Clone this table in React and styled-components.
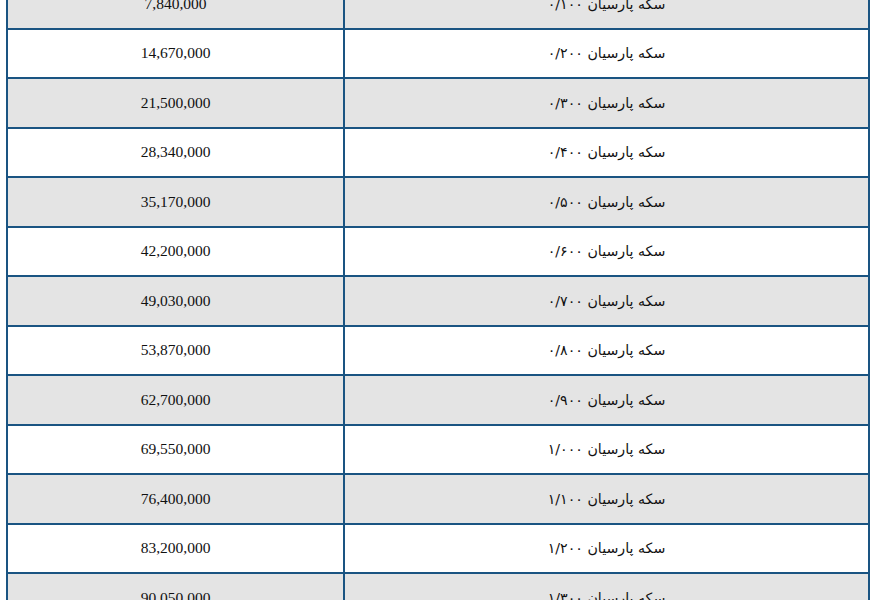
import React from "react";
import styled, { createGlobalStyle } from "styled-components";

const Global = createGlobalStyle`
  html, body { margin: 0; padding: 0; background: #ffffff; }
  body { overflow: hidden; }
`;

const Page = styled.div`
  padding: 0 3px 0 6px;
  margin-top: -22px;
`;

const Table = styled.table`
  direction: rtl;
  width: 864px;
  border-collapse: collapse;
  table-layout: fixed;
`;

const Row = styled.tr`
  height: 49.5px;
  background: ${(p) => (p.$odd ? "#e4e4e4" : "#ffffff")};
`;

const Cell = styled.td`
  border: 2px solid #1a5482;
  text-align: center;
  vertical-align: middle;
  padding: 0;
  color: #111;
`;

const NameCell = styled(Cell)`
  width: 523px;
  font-family: "DejaVu Sans", Tahoma, sans-serif;
  font-size: 14.2px;
`;

const PriceCell = styled(Cell)`
  font-family: "Liberation Serif", "Times New Roman", serif;
  font-size: 15.5px;
  direction: ltr;
`;

const rows = [
  ["۰/۱۰۰", "7,840,000"],
  ["۰/۲۰۰", "14,670,000"],
  ["۰/۳۰۰", "21,500,000"],
  ["۰/۴۰۰", "28,340,000"],
  ["۰/۵۰۰", "35,170,000"],
  ["۰/۶۰۰", "42,200,000"],
  ["۰/۷۰۰", "49,030,000"],
  ["۰/۸۰۰", "53,870,000"],
  ["۰/۹۰۰", "62,700,000"],
  ["۱/۰۰۰", "69,550,000"],
  ["۱/۱۰۰", "76,400,000"],
  ["۱/۲۰۰", "83,200,000"],
  ["۱/۳۰۰", "90,050,000"],
];

export default function App() {
  return (
    <>
      <Global />
      <Page>
        <Table>
          <tbody>
            {rows.map(([w, price], i) => (
              <Row key={w} $odd={i % 2 === 0}>
                <NameCell>{`سکه پارسیان ${w}`}</NameCell>
                <PriceCell>{price}</PriceCell>
              </Row>
            ))}
          </tbody>
        </Table>
      </Page>
    </>
  );
}
